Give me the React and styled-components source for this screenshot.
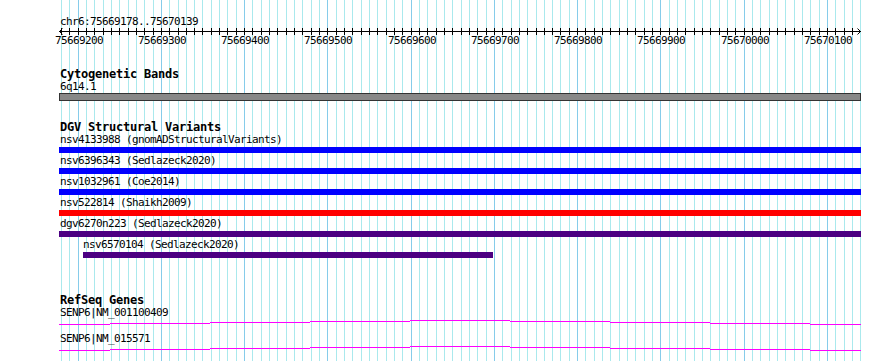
import styled, { createGlobalStyle } from "styled-components";

const START = 75669178;
const END = 75670139;
const PLOT_LEFT = 59.3;
const SCALE = 749.3 / 900;

const toX = (pos) => PLOT_LEFT + (pos - START) * SCALE;
const relX = (pos) => toX(pos) - 59;

const gridPositions = [];
for (let p = 75669180; p <= 75670140; p += 10) gridPositions.push(p);

const variants = [
  { id: "nsv4133988", study: "gnomADStructuralVariants", color: "#0000ff" },
  { id: "nsv6396343", study: "Sedlazeck2020", color: "#0000ff" },
  { id: "nsv1032961", study: "Coe2014", color: "#0000ff" },
  { id: "nsv522814", study: "Shaikh2009", color: "#ff0000" },
  { id: "dgv6270n223", study: "Sedlazeck2020", color: "#4b0082" },
  { id: "nsv6570104", study: "Sedlazeck2020", color: "#4b0082", left: 24, width: 410 },
];

const genes = ["SENP6|NM_001100409", "SENP6|NM_015571"];

// little steps of the gene line, as the canvas drew it
const geneSteps = [
  [0, 51, 6],
  [51, 151, 5],
  [151, 251, 4],
  [251, 351, 3],
  [351, 451, 2],
  [451, 551, 3],
  [551, 651, 4],
  [651, 751, 5],
  [751, 802, 6],
];

function Grid() {
  return (
    <GridLayer width="890" height="361">
      {gridPositions.map((p) => (
        <rect
          key={p}
          x={Math.round(toX(p))}
          y="0"
          width="1"
          height="361"
          fill={p % 100 === 0 ? "#86ccea" : "#aae9ed"}
        />
      ))}
    </GridLayer>
  );
}

function Ruler() {
  const ticks = gridPositions.filter((p) => p <= END);
  const majors = ticks.filter((p) => p % 100 === 0);
  return (
    <RulerBox>
      <ChrLabel>chr6:75669178..75670139</ChrLabel>
      <RulerSvg width="802" height="23">
        <g stroke="#000" strokeWidth="1" fill="none" shapeRendering="crispEdges">
          <line x1="0" y1="4.5" x2="802" y2="4.5" />
          {ticks.map((p) => (
            <line key={p} x1={Math.round(relX(p)) + 0.5} y1="1" x2={Math.round(relX(p)) + 0.5} y2="8" />
          ))}
        </g>
        <g stroke="#000" strokeWidth="1" fill="none">
          <polyline points="3.5,1.5 0.5,4.5 3.5,7.5" />
          <polyline points="798.5,1.5 801.5,4.5 798.5,7.5" />
        </g>
        {majors.map((p) => (
          <TickText key={p} x={Math.round(relX(p)) + 1} y="16.5" textAnchor="middle">
            {p}
          </TickText>
        ))}
      </RulerSvg>
    </RulerBox>
  );
}

function GeneRow({ name }) {
  return (
    <div>
      <Label>{name}</Label>
      <GeneSvg width="802" height="16">
        {geneSteps.map(([a, b, y]) => (
          <rect key={a} x={a} y={y} width={b - a} height="1" fill="#ff00ff" />
        ))}
      </GeneSvg>
    </div>
  );
}

export default function App() {
  return (
    <>
      <GlobalStyle />
      <Browser>
        <Grid />
        <Tracks>
          <Ruler />

          <Track $gap={18}>
            <TrackTitle>Cytogenetic Bands</TrackTitle>
            <Label>6q14.1</Label>
            <BandBar />
          </Track>

          <Track $gap={20}>
            <TrackTitle>DGV Structural Variants</TrackTitle>
            <div>
              {variants.map((v) => (
                <FeatureRow key={v.id}>
                  <Label $left={v.left ? v.left - 1 : 0}>
                    {v.id} ({v.study})
                  </Label>
                  <Bar $color={v.color} $left={v.left || 0} $width={v.width ? `${v.width}px` : "100%"} />
                </FeatureRow>
              ))}
            </div>
          </Track>

          <Track $gap={33}>
            <TrackTitle>RefSeq Genes</TrackTitle>
            <div>
              {genes.map((g) => (
                <GeneRow key={g} name={g} />
              ))}
            </div>
          </Track>
        </Tracks>
      </Browser>
    </>
  );
}

const GlobalStyle = createGlobalStyle`
  html, body {
    margin: 0;
    padding: 0;
    background: #fff;
  }
  body {
    font-family: "DejaVu Sans Mono", "Liberation Mono", monospace;
    color: #000;
  }
`;

const Browser = styled.div`
  position: relative;
  width: 890px;
  height: 361px;
  overflow: hidden;
  background: #fff;
`;

const GridLayer = styled.svg`
  position: absolute;
  left: 0;
  top: 0;
  pointer-events: none;
`;

const Tracks = styled.div`
  position: relative;
  margin-left: 59px;
  width: 802px;
`;

const RulerBox = styled.div`
  box-sizing: border-box;
  height: 50px;
  padding-top: 17px;
`;

const ChrLabel = styled.div`
  height: 10px;
  padding-left: 1px;
  font-size: 11px;
  line-height: 10px;
  letter-spacing: -0.62px;
  white-space: nowrap;
`;

const RulerSvg = styled.svg`
  display: block;
  overflow: visible;
`;

const TickText = styled.text`
  font-family: "DejaVu Sans Mono", monospace;
  font-size: 11px;
  letter-spacing: -0.62px;
  fill: #000;
`;

const Track = styled.section`
  margin-top: ${(p) => p.$gap}px;
`;

const TrackTitle = styled.h3`
  margin: 0 0 2px;
  height: 12px;
  padding-left: 1px;
  font-size: 12px;
  font-weight: bold;
  line-height: 12px;
  letter-spacing: -0.22px;
  white-space: nowrap;
`;

const Label = styled.div`
  height: 10px;
  padding-left: ${(p) => (p.$left || 0) + 1}px;
  font-size: 11px;
  line-height: 10px;
  letter-spacing: -0.62px;
  white-space: nowrap;
`;

const BandBar = styled.div`
  box-sizing: border-box;
  margin-top: 1px;
  height: 8px;
  border: 1px solid #333;
  background: #888;
`;

const FeatureRow = styled.div`
  padding-bottom: 3px;
`;

const Bar = styled.div`
  margin-top: 2px;
  margin-left: ${(p) => p.$left}px;
  width: ${(p) => p.$width};
  height: 6px;
  background: ${(p) => p.$color};
`;

const GeneSvg = styled.svg`
  display: block;
`;
